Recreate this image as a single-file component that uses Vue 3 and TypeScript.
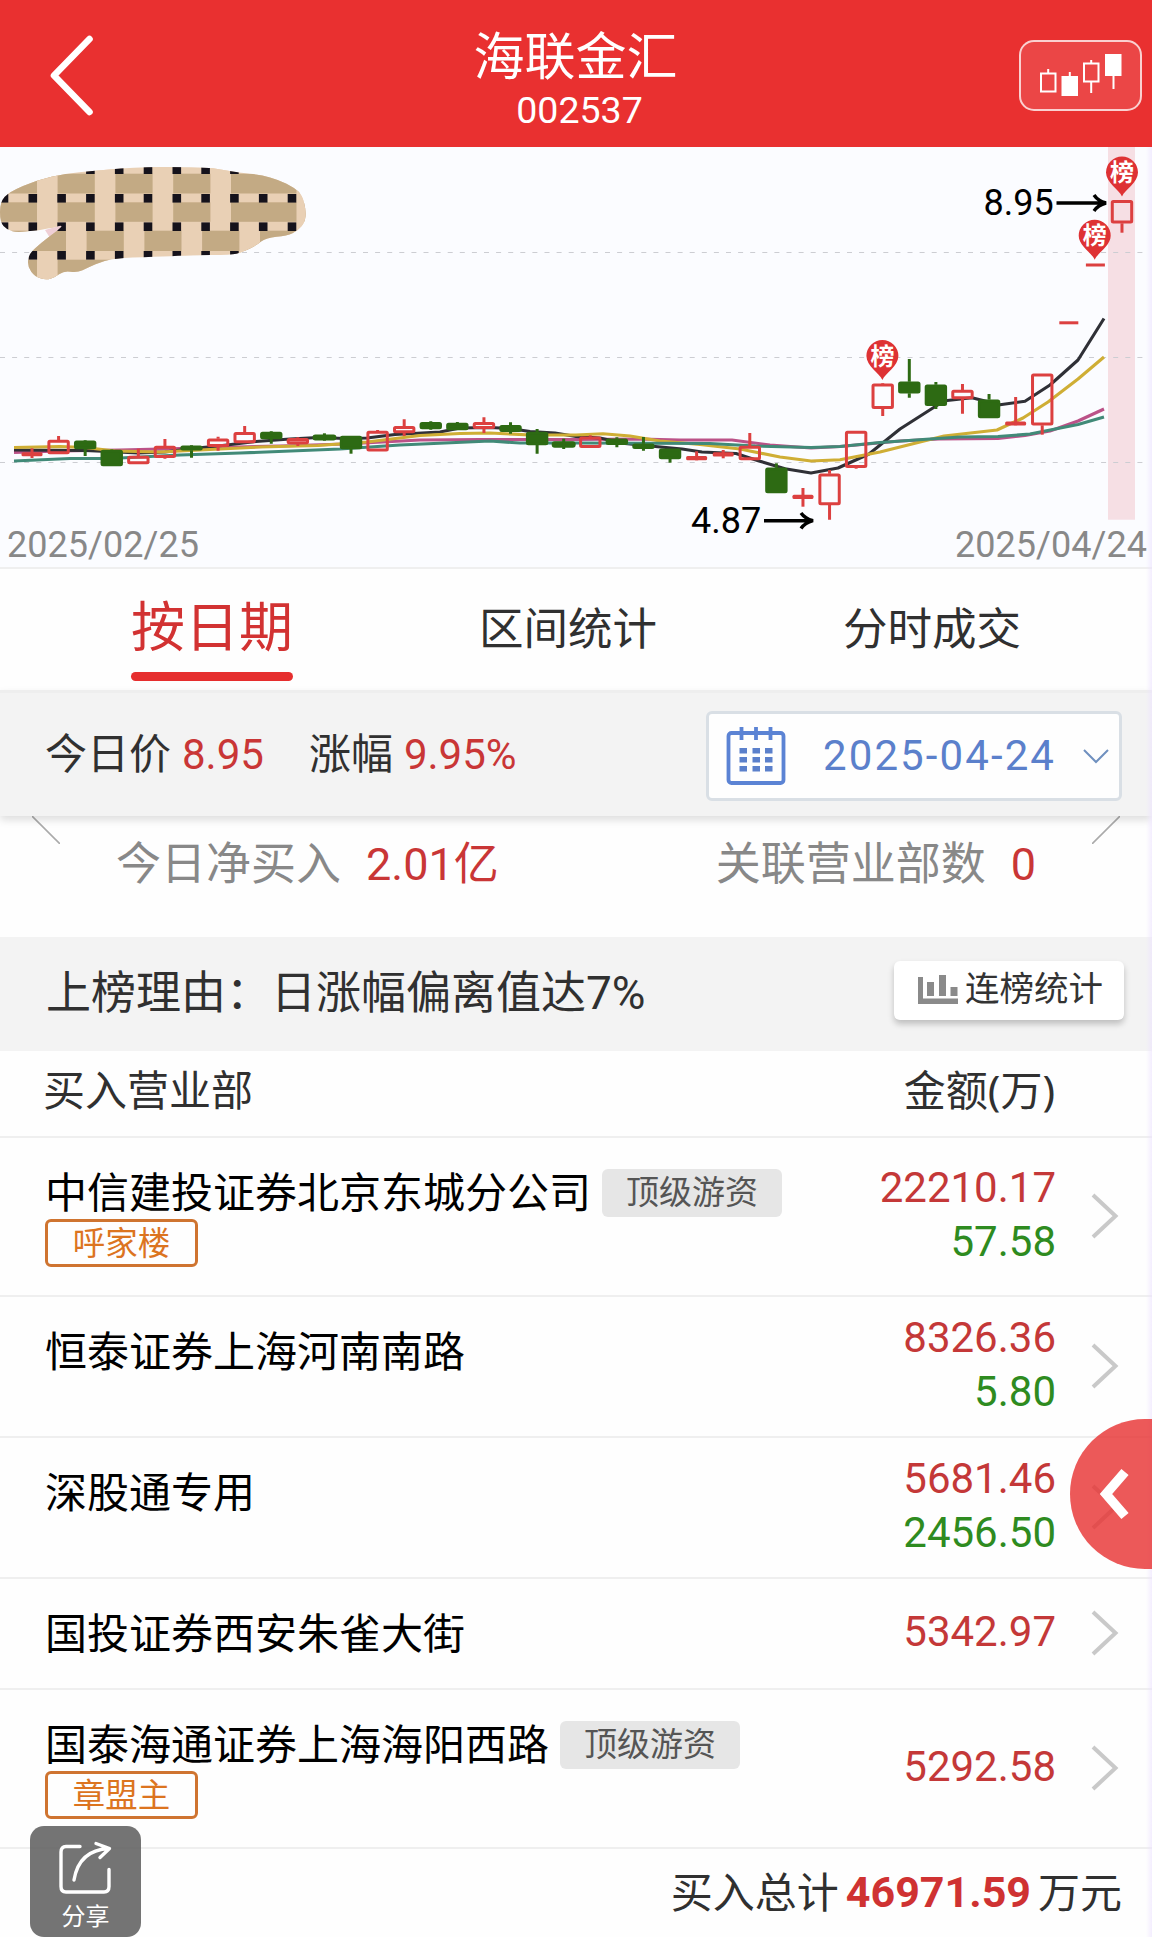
<script setup lang="ts">
type Candle = { up: boolean; top: number; bottom: number; high: number; low: number }
type Point = [number, number]

interface Seat {
  name: string
  level?: string
  alias?: string
  buy: string
  sell?: string
}

const FIRST_X = 32
const STEP = 26.585
const BODY = 21.4

const raw: [string, number, number, number, number][] = [
  ['r', 452.3, 456.3, 448.3, 458], ['r', 440, 454, 436, 454], ['g', 440.7, 449, 440, 456],
  ['g', 450, 466, 449.5, 466], ['r', 456, 464, 448.7, 464], ['r', 446, 457.7, 439, 458.7],
  ['g', 445.7, 450.3, 445, 457.7], ['r', 438.7, 446.7, 436.7, 450.7], ['r', 432.3, 443, 426, 443],
  ['g', 432, 439, 431.3, 443.7], ['r', 438.3, 444, 437.3, 446], ['g', 436, 439, 433.3, 440.7],
  ['g', 436, 449, 436, 453.7], ['r', 431, 451.3, 430, 451.3], ['r', 426.3, 433, 419.3, 436],
  ['g', 422.3, 429, 421.3, 429.7], ['g', 423, 430, 422, 430], ['r', 422.3, 428.7, 417.3, 433],
  ['g', 425.3, 431.7, 422.3, 433.7], ['g', 432, 445, 429, 453.7], ['g', 442.7, 446.3, 438.7, 449],
  ['r', 436.7, 447.7, 435.3, 447.7], ['g', 438.7, 444.7, 437.3, 447.3], ['g', 443.7, 448.7, 437, 450.7],
  ['g', 448.7, 459, 448.7, 462.7], ['r', 456, 460.3, 451.3, 460.3], ['r', 452.3, 456.6, 450, 458.3],
  ['r', 446, 460, 433, 460], ['g', 467.7, 493, 463.3, 493], ['r', 494.7, 499, 488, 506.7],
  ['r', 473.7, 505, 470, 519.7], ['r', 431, 467.7, 431, 468.7], ['r', 383.7, 408.7, 383, 416],
  ['g', 381.7, 393.3, 359, 397.7], ['g', 384.7, 405.7, 382, 409], ['r', 390, 399, 384, 413.7],
  ['g', 399.7, 418, 394, 418], ['r', 421.4, 425.4, 397, 425.3], ['r', 373.7, 425.3, 373.7, 434.7],
  ['r', 321.3, 324.3, 321.3, 324.3], ['r', 263.5, 266.5, 263.5, 266.5], ['r', 200.3, 223.3, 200.3, 232.7],
]
const candles: Candle[] = raw.map(([c, top, bottom, high, low]) => ({ up: c === 'r', top, bottom, high, low }))
const cx = (i: number): number => FIRST_X + i * STEP

const toPath = (pts: Point[]): string => pts.map(([x, y], i) => `${i ? 'L' : 'M'}${x} ${y}`).join('')

const averages: { color: string; d: string }[] = [
  {
    color: '#bb5288',
    d: toPath([[14, 452.5], [60, 451], [120, 450], [200, 448], [280, 446], [345, 444], [420, 440], [480, 439.5], [576, 439.5], [640, 439], [680, 440], [732, 440], [770, 445], [811, 448], [840, 446.5], [900, 441], [939, 439], [998, 438.5], [1025, 435.5], [1050, 431], [1078, 421], [1104, 409]]),
  },
  {
    color: '#2f3036',
    d: toPath([[14, 450], [85, 450.5], [113, 451.7], [138, 453], [165, 452], [192, 448.5], [218, 446], [231, 444.5], [256, 441.5], [290, 439], [318, 437.5], [345, 438.5], [367, 438], [395, 434.5], [440, 432], [460, 428], [490, 427.5], [510, 428.5], [530, 431.5], [555, 433], [576, 436.5], [600, 438], [625, 443.5], [650, 446], [682, 449], [702, 452], [736, 453.5], [759, 461], [785, 468.7], [811, 473], [838, 468], [869, 454], [900, 429], [936, 406], [945, 400.7], [972, 397.7], [1000, 404.7], [1025, 401.3], [1050, 385], [1078, 360], [1104, 318.5]]),
  },
  {
    color: '#cfae35',
    d: toPath([[14, 447.5], [60, 446.5], [85, 447.5], [115, 451], [160, 452], [200, 450], [260, 447], [318, 445.5], [367, 442], [420, 435.5], [460, 433.5], [490, 433], [530, 435], [576, 435], [603, 433.7], [630, 436], [660, 441], [700, 444.5], [740, 449], [780, 457], [811, 461], [840, 459.7], [880, 452], [944, 436], [997, 430], [1023, 418], [1048, 402], [1078, 379], [1104, 357]]),
  },
  {
    color: '#418a78',
    d: toPath([[14, 461], [70, 458.5], [110, 458.5], [180, 455], [240, 453], [340, 449], [400, 445], [490, 441], [520, 443], [576, 443], [710, 443.5], [755, 446], [811, 447.5], [840, 446.5], [880, 442.5], [930, 439], [960, 437], [998, 436.5], [1030, 434], [1078, 424.5], [1104, 417]]),
  },
]

const pins = [
  { x: 1122, y: 172.5 },
  { x: 1094.7, y: 235.7 },
  { x: 882.4, y: 356 },
]

// Smooth closed outline of the plaid patch.
const outline: Point[] = [
  [0, 202], [9, 192], [37, 180], [66, 173.3], [92, 171], [121, 168.3], [147, 167], [176, 167], [206, 167.3],
  [220, 169.3], [239, 172.7], [261, 175], [279, 180], [294, 187.7], [302, 195], [306, 210], [305, 222],
  [298, 230.7], [287, 235.7], [266, 237.7], [257, 245], [242, 252.3], [231, 255], [191, 255], [165, 256.7],
  [121, 257.7], [103, 261], [88, 267.7], [77, 272.7], [64, 270.7], [55, 277.3], [46, 280], [35, 276.7],
  [27.5, 266.7], [28.6, 255], [35, 248.3], [48, 237.3], [66, 224], [48, 229], [18, 232.7], [7, 230], [0, 222],
]
const mid = (a: Point, b: Point): Point => [(a[0] + b[0]) / 2, (a[1] + b[1]) / 2]
const patchPath = (() => {
  const n = outline.length
  const s = mid(outline[n - 1], outline[0])
  let d = `M${s[0]} ${s[1]}`
  outline.forEach((p, i) => {
    const m = mid(p, outline[(i + 1) % n])
    d += `Q${p[0]} ${p[1]} ${m[0]} ${m[1]}`
  })
  return d + 'Z'
})()
const bands: Point[] = [[173.7, 19.8], [202.3, 19.5], [230.7, 20.3], [259.7, 22]]
const strips = [
  ...[37, 94.8, 152.6, 210.4].map((x) => ({ x, y: 160, h: 68 })),
  { x: 296.5, y: 160, h: 80 },
  ...[66, 123.8, 181.5, 239.4].map((x) => ({ x, y: 228, h: 28 })),
  { x: 37, y: 256, h: 30 },
]
const knots = [169.7, 198.3, 226.7, 255.3].flatMap((y) => Array.from({ length: 11 }, (_, i) => ({ x: 4 + i * 28.8, y })))

const seats: Seat[] = [
  { name: '中信建投证券北京东城分公司', level: '顶级游资', alias: '呼家楼', buy: '22210.17', sell: '57.58' },
  { name: '恒泰证券上海河南南路', buy: '8326.36', sell: '5.80' },
  { name: '深股通专用', buy: '5681.46', sell: '2456.50' },
  { name: '国投证券西安朱雀大街', buy: '5342.97' },
  { name: '国泰海通证券上海海阳西路', level: '顶级游资', alias: '章盟主', buy: '5292.58' },
]
</script>

<template>
  <main class="page">
    <header class="header">
      <svg class="back" width="52" height="90" viewBox="0 0 52 90"><path d="M43.500 9 8 45.500 43.500 82" /></svg>
      <div class="title">
        <h1>海联金汇</h1>
        <span>002537</span>
      </div>
      <button class="kbtn">
        <svg width="84" height="46" viewBox="0 0 84 46">
          <path d="M2 21.500h14.500v18H2zM9.200 17v4.500M45 11.500h14.500v18H45zM52.200 8v3.500M52.200 29.500V41" class="hollow" />
          <path d="M22.500 24h16.500v20H22.500zM66 2h16.500v22H66zM29.800 20h2v4h-2zM73.500 24h2v13h-2z" class="solid" />
        </svg>
      </button>
    </header>

    <svg class="chart" width="1152" height="420" viewBox="0 147 1152 420">
      <rect x="1108" y="147" width="27" height="372.700" fill="#f6dfe4" />
      <path class="grid" d="M0 252.500H1146M0 357.500H1146M0 462.500H1146" />
      <defs><clipPath id="patch"><path :d="patchPath" /></clipPath></defs>
      <path d="M45 230 66 224 50 238z" fill="#efcfd6" />
      <g clip-path="url(#patch)">
        <rect x="0" y="160" width="320" height="130" fill="#e9d0b5" />
        <rect v-for="b in bands" :key="b[0]" x="0" :y="b[0]" width="320" :height="b[1]" fill="#c3aa84" />
        <rect v-for="(s, i) in strips" :key="i" :x="s.x" :y="s.y" width="20.600" :height="s.h" fill="#e9d0b5" />
        <rect v-for="(k, i) in knots" :key="'k' + i" :x="k.x - 4.3" :y="k.y - 4.3" width="8.600" height="8.600" fill="#15121b" />
      </g>
      <path v-for="m in averages" :key="m.color" :d="m.d" :stroke="m.color" class="ma" />
      <g v-for="(c, i) in candles" :key="i" :class="c.up ? 'up' : 'down'">
        <template v-if="c.bottom - c.top <= 4.4">
          <rect :x="cx(i) - (i > 38 ? 9.5 : 10.5)" :y="c.top" :width="i > 38 ? 19 : 21" :height="c.bottom - c.top" :rx="i > 38 ? 0 : 1.5" class="fill" />
          <path v-if="i < 39" :d="`M${cx(i)} ${c.high}V${c.low}`" />
        </template>
        <template v-else>
          <rect :x="cx(i) - BODY / 2 + 1" :y="c.top + 1.2" :width="BODY - 2" :height="c.bottom - c.top - 2.4" rx="1" />
          <path :d="`M${cx(i)} ${c.high}V${c.top}M${cx(i)} ${c.bottom}V${c.low}`" />
        </template>
      </g>
      <g v-for="p in pins" :key="p.x" :transform="`translate(${p.x} ${p.y})`">
        <path d="M0 24C-3 17-16 10-16 0A16 16 0 0 1 16 0C16 10 3 17 0 24z" fill="#de3234" />
        <text class="pin" text-anchor="middle" y="8.700">榜</text>
      </g>
      <text class="price" x="983.500" y="215">8.95</text>
      <path class="arrow" d="M1056.500 203H1105M1094 195Q1098 201 1106 203Q1098 205 1094 211" />
      <text class="price" x="691" y="532.500">4.87</text>
      <path class="arrow" d="M764 520.700H812M801 513Q805 518.700 813 520.700Q805 522.700 801 528.500" />
      <text class="day" x="7" y="557" textLength="192">2025/02/25</text>
      <text class="day" x="955" y="557" textLength="192">2025/04/24</text>
    </svg>

    <nav class="tabs">
      <a class="active">按日期</a>
      <a>区间统计</a>
      <a>分时成交</a>
    </nav>

    <section class="today">
      <span>今日价</span><b>8.95</b>
      <span class="chg">涨幅</span><b>9.95%</b>
      <div class="picker">
        <svg width="60" height="60" viewBox="0 0 60 60">
          <rect x="2.500" y="7" width="55" height="50" rx="3" class="frame" />
          <path d="M15.500 1v13M30 1v13M44.500 1v13" class="frame" />
          <path d="M13.500 22h7.500v5.500h-7.500zM26.500 22h7.500v5.500h-7.500zM39 22h7.500v5.500h-7.500zM13.500 31h7.500v5.500h-7.500zM26.500 31h7.500v5.500h-7.500zM39 31h7.500v5.500h-7.500zM13.500 40h7.500v5.500h-7.500zM26.500 40h7.500v5.500h-7.500zM39 40h7.500v5.500h-7.500z" fill="#5b80cb" />
        </svg>
        <span>2025-04-24</span>
        <svg class="down-arrow" width="26" height="16" viewBox="0 0 26 16"><path d="M1 2 13 14 25 2" /></svg>
      </div>
    </section>

    <section class="summary">
      <svg class="edge" width="28" height="28" viewBox="0 0 28 28"><path d="M0 0 28 28" /></svg>
      <p class="net">今日净买入<b>2.01亿</b></p>
      <p class="rel">关联营业部数<b>0</b></p>
      <svg class="edge" width="28" height="28" viewBox="0 0 28 28"><path d="M28 0 0 28" /></svg>
    </section>

    <section class="reason">
      <p lang="zh-CN">上榜理由：日涨幅偏离值达<em>7%</em></p>
      <button class="stat">
        <svg width="40" height="30" viewBox="0 0 40 30" fill="#8a8a8a">
          <path d="M0 3h5v21.500h35V30H0zM9 8h7v14H9zM21 1h7v21h-7zM32.500 13h7v9h-7z" />
        </svg>
        <span>连榜统计</span>
      </button>
    </section>

    <div class="thead"><span>买入营业部</span><span>金额(万)</span></div>

    <ul class="list">
      <li v-for="s in seats" :key="s.name" :class="{ tall: s.alias, short: !s.alias && !s.sell }">
        <div class="seat">
          <div class="line"><span class="name">{{ s.name }}</span><i v-if="s.level" class="level">{{ s.level }}</i></div>
          <i v-if="s.alias" class="alias">{{ s.alias }}</i>
        </div>
        <div class="nums">
          <span>{{ s.buy }}</span>
          <span v-if="s.sell" class="sell">{{ s.sell }}</span>
        </div>
        <svg class="chev" width="28" height="48" viewBox="0 0 28 48"><path d="M2 3 24.500 24 2 45" /></svg>
      </li>
    </ul>

    <footer class="total"><span>买入总计</span><b>46971.59</b><span>万元</span></footer>

    <div class="rim"></div>
    <button class="drawer"><svg width="30" height="56" viewBox="0 0 30 56"><path d="M26 6 7 28 26 50" /></svg></button>
    <button class="share">
      <svg width="56" height="56" viewBox="0 0 56 56">
        <path d="M22 6.500H8Q3 6.500 3 12V46.500Q3 52 8 52H46Q51 52 51 46.500V29.500M16 40Q21 10 51 8.500M38 3.500 51.500 8.500 42 17.500" />
      </svg>
      <span>分享</span>
    </button>
  </main>
</template>

<style>
body {
  margin: 0;
  background: #fefefe;
}
</style>

<style scoped>
.page {
  position: relative;
  width: 1152px;
  height: 1937px;
  overflow: hidden;
  background: #fefefe;
  color: #303030;
  font-family: "Noto Sans", "Noto Sans CJK SC", sans-serif;
  font-size: 42px;
}
.page * {
  box-sizing: border-box;
}
button {
  border: 0;
  padding: 0;
  font-family: inherit;
}
svg {
  display: block;
  flex: none;
}
p, h1, ul {
  margin: 0;
  padding: 0;
}
i, em {
  font-style: normal;
}
b, em, .nums, .price, .day, .title span, .picker span {
  font-family: Roboto, "Noto Sans CJK SC", sans-serif;
}
b {
  font-weight: 400;
  color: #c93636;
}
.header {
  height: 147px;
  background: #e93030;
  display: flex;
  justify-content: space-between;
  padding: 0 10px 0 46px;
  color: #fff;
}
.back {
  margin-top: 30px;
}
.back path {
  fill: none;
  stroke: #fff;
  stroke-width: 6.6;
  stroke-linecap: round;
  stroke-linejoin: round;
}
.title {
  display: flex;
  flex-direction: column;
  align-items: center;
  margin-left: 34px;
}
.title h1 {
  font-size: 51px;
  font-weight: 400;
  line-height: 60px;
  margin-top: 25px;
}
.title span {
  font-size: 37.5px;
  line-height: 40px;
  margin: 5px 0 0 8px;
}
.kbtn {
  width: 123px;
  height: 71px;
  margin-top: 40px;
  border: 2px solid rgba(255, 255, 255, 0.75);
  border-radius: 15px;
  background: #eb4646;
  display: flex;
  padding: 10px 0 0 18px;
}
.hollow {
  fill: none;
  stroke: #fff;
  stroke-width: 2;
}
.solid {
  fill: #fff;
}
.chart {
  background: #fbfcff;
}
.grid {
  stroke: #cccdd2;
  stroke-dasharray: 5 7.1;
  fill: none;
}
.ma {
  fill: none;
  stroke-width: 3.1;
  stroke-linejoin: round;
}
.up {
  stroke: #dc4040;
  stroke-width: 3;
  fill: none;
}
.up .fill {
  fill: #dc4040;
  stroke: none;
}
.down {
  stroke: #2d6a13;
  stroke-width: 3;
  fill: #2d6a13;
}
.pin {
  font-size: 24px;
  font-weight: 700;
  fill: #fff;
  font-family: "Noto Sans CJK SC", sans-serif;
}
.price {
  font-size: 36px;
  fill: #000;
}
.arrow {
  fill: none;
  stroke: #000;
  stroke-width: 3.4;
}
.day {
  font-size: 36px;
  fill: #888;
}
.tabs {
  height: 123px;
  border-top: 2px solid #efefef;
  display: flex;
  gap: 186px;
  padding-left: 131px;
  font-size: 44.5px;
}
.tabs a {
  height: 112px;
  line-height: 117px;
}
.tabs .active {
  position: relative;
  font-size: 54px;
  line-height: 115px;
  color: #d23232;
}
.active::after {
  content: "";
  position: absolute;
  left: 0;
  right: 0;
  bottom: 0;
  height: 9px;
  border-radius: 5px;
  background: #e62e2e;
}
.today {
  position: relative;
  height: 126px;
  background: #f3f3f3;
  border-top: 3px solid #eeeeee;
  box-shadow: 0 4px 8px rgba(0, 0, 0, 0.13);
  display: flex;
  align-items: center;
  padding: 0 30px 0 45px;
  line-height: 60px;
}
.today > span {
  margin-bottom: 4px;
}
.today b {
  margin-left: 11px;
}
.today .chg {
  margin-left: 45px;
}
.picker {
  width: 416px;
  height: 90px;
  margin-left: auto;
  margin-top: 3px;
  border: 3px solid #d9dfe5;
  border-radius: 6px;
  background: #fefefe;
  display: flex;
  align-items: center;
  padding: 0 10px 1px 17px;
  color: #5b80cb;
}
.picker span {
  margin: 1px 0 0 37px;
  letter-spacing: 2.1px;
  white-space: nowrap;
}
.frame {
  fill: none;
  stroke: #5b83d4;
  stroke-width: 3.8;
}
.down-arrow {
  margin-left: auto;
}
.down-arrow path {
  fill: none;
  stroke: #6f90bf;
  stroke-width: 2;
}
.summary {
  height: 121px;
  display: flex;
  padding: 0 32px;
  font-size: 45px;
  color: #888;
  line-height: 60px;
}
.summary p {
  margin-top: 17px;
}
.summary b {
  font-size: 45px;
}
.net {
  margin-left: 56px;
}
.net b {
  margin-left: 25px;
}
.rel {
  margin-left: auto;
}
.rel b {
  margin-left: 25px;
}
.summary .edge:last-child {
  margin-left: 56px;
}
.edge path {
  stroke: #aaa;
  stroke-width: 1.6;
}
.reason {
  height: 114px;
  background: #f3f3f3;
  display: flex;
  justify-content: space-between;
  padding: 24px 28px 0 46px;
  font-size: 45px;
}
.reason p {
  line-height: 60px;
  margin-top: 1px;
}
.reason em {
  font-size: 46px;
}
.stat {
  width: 230px;
  height: 59px;
  border-radius: 6px;
  background: #fff;
  box-shadow: 0 4px 6px rgba(0, 0, 0, 0.22);
  display: flex;
  padding: 13px 0 0 24px;
  color: #333;
}
.stat span {
  font-size: 34.5px;
  line-height: 34px;
  margin: -3px 0 0 7px;
  white-space: nowrap;
}
.thead {
  height: 87px;
  border-bottom: 2px solid #efefef;
  display: flex;
  justify-content: space-between;
  padding: 9px 97px 0 43px;
  line-height: 60px;
}
.list {
  list-style: none;
  color: #000;
}
.list li {
  height: 141px;
  border-bottom: 2px solid #efefef;
  display: flex;
  align-items: center;
  padding: 0 33px 0 45px;
}
.list li.tall {
  height: 159px;
}
.list li.short {
  height: 111px;
}
.seat {
  align-self: flex-start;
  padding-top: 31px;
}
.line {
  display: flex;
  height: 50px;
}
.name {
  line-height: 46px;
}
.level {
  width: 180px;
  height: 48px;
  margin-left: 11px;
  border-radius: 6px;
  background: #e6e6e6;
  color: #555;
  font-size: 33px;
  line-height: 46px;
  text-align: center;
}
.alias {
  display: block;
  width: 153px;
  height: 48px;
  border: 3px solid #cf7430;
  border-radius: 6px;
  color: #dc741f;
  font-size: 32.5px;
  line-height: 41px;
  text-align: center;
}
.nums {
  margin-left: auto;
  padding-bottom: 4px;
  display: flex;
  flex-direction: column;
  align-items: flex-end;
  line-height: 54px;
  color: #c43838;
}
.nums .sell {
  color: #2e8b20;
}
.chev {
  margin: 0 0 2px 35px;
}
.chev path {
  fill: none;
  stroke: #c9c9c9;
  stroke-width: 4;
}
.total {
  height: 89px;
  display: flex;
  justify-content: flex-end;
  padding: 13px 30px 0 0;
  line-height: 60px;
}
.total b {
  font-size: 43px;
  font-weight: 700;
  margin: 0 7px;
  color: #cf3232;
}
.drawer {
  position: absolute;
  left: 1070px;
  top: 1419px;
  width: 82px;
  height: 150px;
  border-radius: 75px 0 0 75px;
  background: rgba(232, 50, 50, 0.81);
}
.drawer svg {
  margin: 0 0 0 29px;
}
.drawer path {
  fill: none;
  stroke: #fff;
  stroke-width: 9.5;
}
.share {
  position: absolute;
  left: 30px;
  top: 1826px;
  width: 111px;
  height: 111px;
  border-radius: 14px;
  background: rgba(95, 95, 95, 0.87);
  color: #fff;
  display: flex;
  flex-direction: column;
  align-items: center;
  padding-top: 14px;
}
.share path {
  fill: none;
  stroke: #fff;
  stroke-width: 3.4;
  stroke-linecap: round;
  stroke-linejoin: round;
}
.share span {
  font-size: 24px;
  line-height: 30px;
  margin-top: 5px;
}
.rim {
  position: absolute;
  right: 0;
  top: 147px;
  width: 6px;
  height: 1790px;
  background: linear-gradient(90deg, rgba(236, 226, 255, 0), rgba(236, 226, 255, 0.6));
}
</style>
